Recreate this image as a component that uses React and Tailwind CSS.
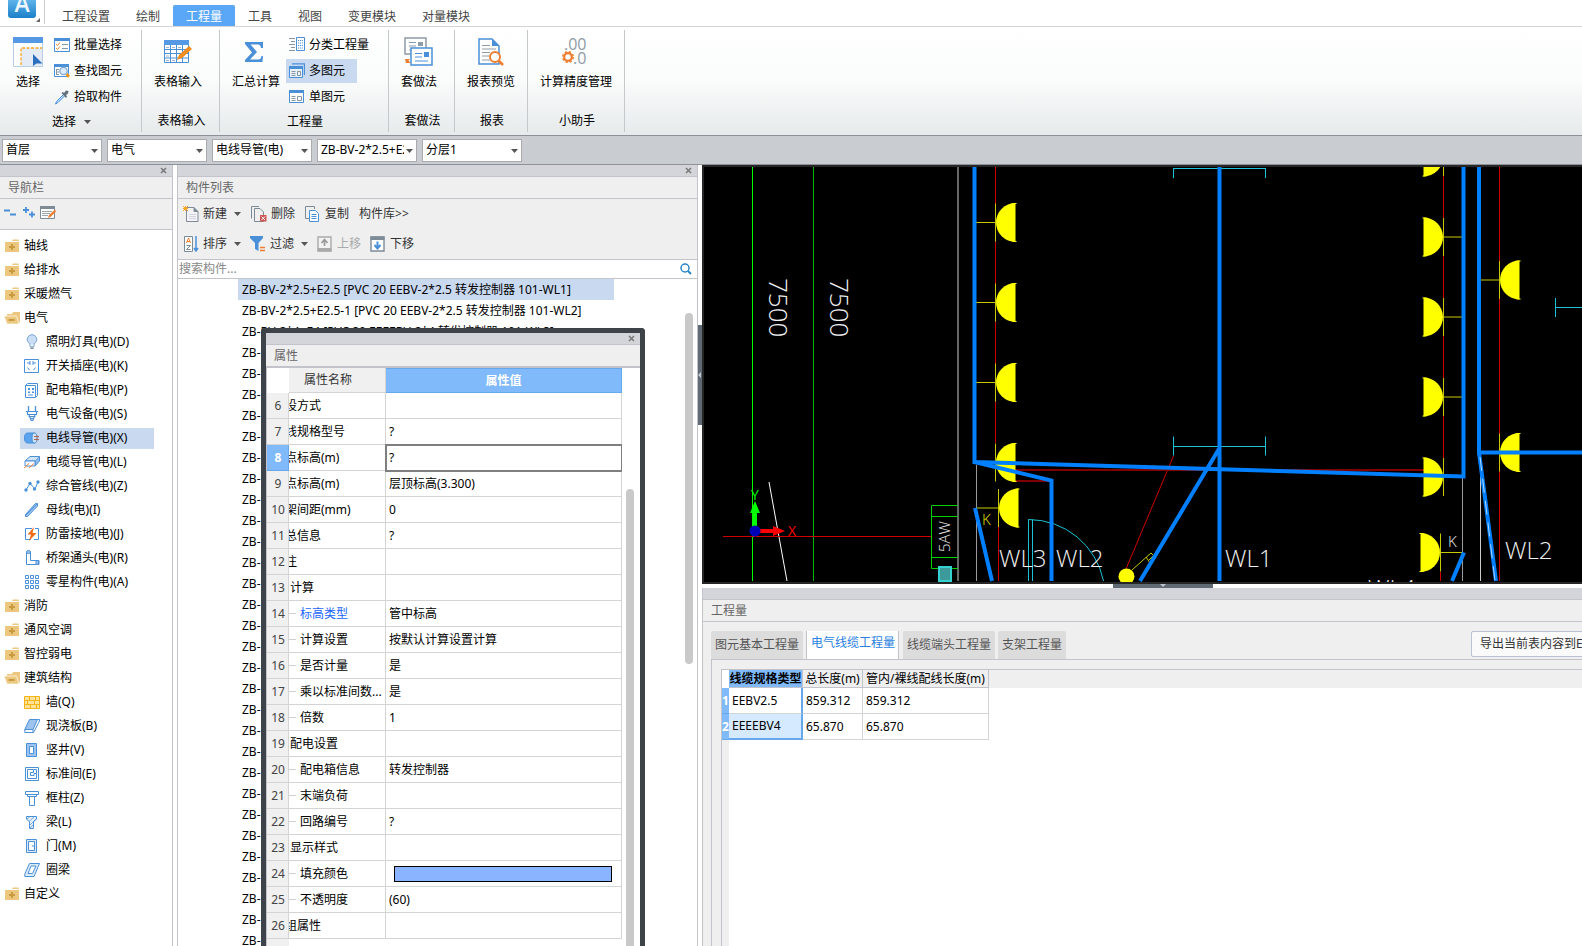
import React, {useState} from 'react';

const BLUE = '#4a90d9';
const TABS = ['工程设置', '绘制', '工程量', '工具', '视图', '变更模块', '对量模块'];
const FILTERS = ['首层', '电气', '电线导管(电)', 'ZB-BV-2*2.5+E2.5', '分层1'];

/* ---------- icons ---------- */

function Svg({size = 16, children, className = ''}) {
    return (
        <svg width={size} height={size} viewBox={`0 0 ${size} ${size}`} fill="none"
             className={`shrink-0 ${className}`} aria-hidden="true">
            {children}
        </svg>
    );
}

function Caret({className = ''}) {
    return (
        <svg width="7" height="4" viewBox="0 0 7 4" className={`shrink-0 ${className}`} aria-hidden="true">
            <path d="M0 0H7L3.5 4Z" fill="#555"/>
        </svg>
    );
}

function CloseIcon() {
    return (
        <svg width="7" height="7" viewBox="0 0 7 7" aria-hidden="true">
            <path d="M1 1L6 6M6 1L1 6" stroke="#777" strokeWidth="1.5"/>
        </svg>
    );
}

function FolderClosed() {
    return (
        <Svg>
            <path d="M1 4H15V14H1Z" fill="#ecc77f"/>
            <path d="M8 2.5L9 1.5H14L15 3H8Z" fill="#ecc77f"/>
            <path d="M5 9H11M8 6V12" stroke="#c99b41" strokeWidth="2"/>
        </Svg>
    );
}

function FolderOpen() {
    return (
        <Svg>
            <path d="M3 6V4H8L9 2H16V12L14 14L12 6Z" fill="#ecc77f"/>
            <path d="M0 6H12.5L15 14H3Z" fill="#ecc77f" stroke="#fff" strokeWidth=".7"/>
            <path d="M4.500 10H10.500" stroke="#c99b41" strokeWidth="2"/>
        </Svg>
    );
}

const NAV_ICONS = {
    bulb: <>
        <circle cx="8" cy="5.500" r="4.800" fill="#c9def5" stroke="#7aa5d6"/>
        <path d="M5.500 9.500L6.500 13H9.500L10.500 9.500" fill="#e3effb" stroke="#7aa5d6"/>
        <path d="M6.500 13.500H9.500V15H6.500Z" fill="#7c8790"/>
    </>,
    socket: <>
        <path d="M.5 1.500H14.500V14.500H.5Z" stroke={BLUE}/>
        <path d="M3 5H6M9 5H12M6 3V7M9 3V7M3.500 9.500L5.500 12M11.500 9.500L9.500 12" stroke={BLUE}/>
    </>,
    cabinet: <>
        <path d="M1.500 3.500L3.500 1.500H13.500V13.500L11.500 15.500H1.500Z" stroke={BLUE}/>
        <path d="M1.500 3.500H11.500V15" stroke={BLUE}/>
        <path d="M4 6H6V8H4ZM8 6H10V8H8ZM4 9.500H6V11H4ZM8 9.500H10V11H8Z" fill={BLUE}/>
        <path d="M4 13H9" stroke={BLUE}/>
    </>,
    plug: <>
        <path d="M4.500 0V5M11.500 0V5" stroke={BLUE} strokeWidth="1.300"/>
        <path d="M2 5.500H14M3.500 6V8.500H12.500V6M4.500 10.500H11.500M6 12.500H10M7 14.500H9M5 9L7.500 15M11 9L8.500 15"
              stroke={BLUE} strokeWidth="1.200"/>
    </>,
    conduit: <>
        <path d="M3.500 3H11V13H3.500C1.500 13 .5 11 .5 8S1.500 3 3.500 3Z" fill="#5aa3ee" stroke={BLUE}/>
        <ellipse cx="10.500" cy="8" rx="2.500" ry="5" fill="#cfe4fa" stroke={BLUE}/>
        <path d="M10 6.500H15M10 9.500H15" stroke="#b06a55"/>
        <path d="M13 5V11" stroke="#b06a55" strokeWidth=".6"/>
    </>,
    cable: <>
        <path d="M1 7L6 2.500H15.500L11 7Z" fill="#cfe4fa" stroke={BLUE}/>
        <path d="M11 7V12L15.500 7V2.500" fill="#90bdec" stroke={BLUE}/>
        <path d="M1 7H11V12H1Z" fill="#fff" stroke={BLUE}/>
        <path d="M0 14L5 9.500M5 14L10 9.500" stroke="#ef7d2f"/>
    </>,
    polyline: <>
        <path d="M2 12L6 5.500L11 11L14 4" stroke={BLUE}/>
        <circle cx="2" cy="12" r="1.700" fill={BLUE}/>
        <circle cx="6" cy="5.500" r="1.700" fill={BLUE}/>
        <circle cx="10.500" cy="11" r="1.700" fill={BLUE}/>
        <circle cx="14" cy="4" r="1.700" fill={BLUE}/>
    </>,
    busbar: <path d="M1.500 12.500L11.500 1.500H13.500V4L3.500 14.500H1.500Z M2 13L13 2" fill="#9cc4ee" stroke={BLUE}/>,
    lightning: <>
        <path d="M8 2.500H1.500V13.500H7M10 13.500H14.500V2.500H11" stroke={BLUE}/>
        <path d="M10 1L3.500 8.500H7L5 15L12.500 7H8.500Z" fill="#ef6c1a"/>
    </>,
    elbow: <>
        <path d="M2.500 2V14.500H15V10.500H6.500V2" stroke={BLUE}/>
        <ellipse cx="4.500" cy="2" rx="2" ry="1.500" fill="#9cc4ee" stroke={BLUE}/>
        <path d="M12 10.500H14.500V14.500H12Z" fill="#9cc4ee" stroke={BLUE}/>
    </>,
    grid: <path d="M1.500 1.500H4.500V4.500H1.500ZM6.500 1.500H9.500V4.500H6.500ZM11.500 1.500H14.500V4.500H11.500ZM1.500 6.500H4.500V9.500H1.500ZM6.500 6.500H9.500V9.500H6.500ZM11.500 6.500H14.500V9.500H11.500ZM1.500 11.500H4.500V14.500H1.500ZM6.500 11.500H9.500V14.500H6.500ZM11.500 11.500H14.500V14.500H11.500Z"
                stroke={BLUE}/>,
    wall: <>
        <path d="M.5 2.500H15.500V14.500H.5Z" fill="#ffe39a" stroke="#f5b316"/>
        <path d="M0 6.500H16M0 10.500H16M5.500 2V6M10.500 6V10M3.500 6V10M6.500 10V14M11.500 2V6M12.500 10V14"
              stroke="#f5b316"/>
    </>,
    slab: <>
        <path d="M5.500 1.500H13.500L9 11.500H.8Z" fill="#9cc4ee" stroke={BLUE}/>
        <path d="M.8 11.500V14.500H9.500L15.500 3V1.500H13.500M9 11.500V14" stroke={BLUE}/>
    </>,
    shaft: <>
        <path d="M2.500 1.500H12.500V14.500H2.500Z" fill="#9cc4ee" stroke={BLUE}/>
        <path d="M5.500 4.500H9.500V11.500H5.500Z" fill="#fff" stroke={BLUE}/>
    </>,
    room: <>
        <path d="M1.500 1.500H14.500V14.500H1.500Z" stroke={BLUE}/>
        <path d="M9.500 3.500H3.500V12.500H12.500V7.500M9.500 3.500V6.500H6.500V9.500H10V7.500H12.500V3.500H10" stroke={BLUE}/>
    </>,
    column: <path d="M1.500 1.500H14.500V4.500H1.500ZM5.500 6.500H10.500V15.500H5.500ZM3.500 4.500V6.500H12.500V4.500" stroke={BLUE}/>,
    beam: <>
        <path d="M2.500 2.500H12.500V5L9.500 8V14.500H5.500V8L2.500 5Z" fill="#e3effb" stroke={BLUE}/>
        <path d="M3 5L6 2.500M5 7.500L10 3M6 11L12 5M6 14L9 11" stroke={BLUE} strokeWidth=".7"/>
    </>,
    door: <>
        <path d="M2.500 1.500H12.500V14.500H2.500Z" fill="#dcebfb" stroke={BLUE}/>
        <path d="M4.500 3.500H10.500V12.500H4.500Z" fill="#fff" stroke={BLUE}/>
        <path d="M9 7V9" stroke={BLUE}/>
    </>,
    ring: <>
        <path d="M5.500 1.500H15.500L10 14.500H.8V12Z" fill="#dcebfb" stroke={BLUE}/>
        <path d="M7 4H12L8.500 11.500H4Z" fill="#fff" stroke={BLUE}/>
    </>,
};

const TREE = [
    {name: '轴线'}, {name: '给排水'}, {name: '采暖燃气'},
    {
        name: '电气', children: [
            ['bulb', '照明灯具(电)(D)'], ['socket', '开关插座(电)(K)'], ['cabinet', '配电箱柜(电)(P)'],
            ['plug', '电气设备(电)(S)'], ['conduit', '电线导管(电)(X)'], ['cable', '电缆导管(电)(L)'],
            ['polyline', '综合管线(电)(Z)'], ['busbar', '母线(电)(I)'], ['lightning', '防雷接地(电)(J)'],
            ['elbow', '桥架通头(电)(R)'], ['grid', '零星构件(电)(A)'],
        ]
    },
    {name: '消防'}, {name: '通风空调'}, {name: '智控弱电'},
    {
        name: '建筑结构', children: [
            ['wall', '墙(Q)'], ['slab', '现浇板(B)'], ['shaft', '竖井(V)'], ['room', '标准间(E)'],
            ['column', '框柱(Z)'], ['beam', '梁(L)'], ['door', '门(M)'], ['ring', '圈梁'],
        ]
    },
    {name: '自定义'},
];

/* ---------- ribbon ---------- */

const SelectIcon = (
    <Svg size={30}>
        <path d="M.5 .5H29.500V29.500H.5Z" fill="#fff" stroke="#b9cfe8"/>
        <path d="M0 0H30V6H0Z" fill="#5598e4"/>
        <path d="M8 11H29V29H8Z" fill="#e4ebf5"/>
        <path d="M8 28V11H29" stroke="#f5a623" strokeWidth="1.300" strokeDasharray="3 1.500"/>
        <path d="M20 17V29L23.500 26.500H29.500Z" fill="#2c6fbf"/>
    </Svg>
);

const BatchIcon = (
    <Svg>
        <path d="M.5 1.500H15.500V14.500H.5Z" fill="#fff" stroke={BLUE}/>
        <path d="M0 1H16V4H0Z" fill={BLUE}/>
        <path d="M2 7L3.500 8.500L6 5.500M2 11L3.500 12.500L6 9.500" stroke="#ef8a2f"/>
        <path d="M8 7.500H14M8 11.500H14" stroke="#8796a3"/>
    </Svg>
);

const FindIcon = (
    <Svg>
        <path d="M.5 2.500H14.500V13.500H.5Z" fill="#fff" stroke={BLUE}/>
        <path d="M0 1H15V4H0Z" fill={BLUE}/>
        <path d="M2 6.500H5M2 9H5M2 11.500H5M2.500 6V12" stroke="#8796a3"/>
        <circle cx="9.500" cy="8" r="3.700" fill="#dcebfb" stroke="#7fa9da" strokeWidth="1.300"/>
        <path d="M11.500 12L13.500 10L16 12.500L14 15Z" fill="#f39a1d"/>
    </Svg>
);

const PickIcon = (
    <Svg>
        <path d="M9.500 5.500L2.500 12.500L1.500 15L4 13.500L10.500 7" fill="#bcdcf8" stroke={BLUE}/>
        <path d="M7.500 4L9 3L10 4L12 1.500L14.500 2L14 4.500L12 6L13 7.500L12 9Z" fill="#5f6f7c"/>
    </Svg>
);

const TableIcon = (
    <Svg size={28}>
        <path d="M.5 3.500H24.500V24.500H.5Z" fill="#fff" stroke={BLUE}/>
        <path d="M0 2H25V7H0Z" fill="#5598e4"/>
        <path d="M0 11.500H25M0 15.500H25M0 20H25M6.500 7V25M12.500 7V25M18.500 7V25" stroke={BLUE}/>
        <path d="M2 9.500H5M8 9.500H11M14 9.500H17M2 18H5M2 22.500H5M8 22.500H11" stroke="#9db4cc"/>
        <path d="M13 22L15 17L25 8L28 11L18 20Z" fill="#f28c1e"/>
    </Svg>
);

const SigmaIcon = (
    <Svg size={28}>
        <path d="M3 4H21V10H19C18.500 7 17.500 6.500 15 6.500H8.500L15 14L8 21.500H16C18.500 21.500 19 20.500 19.500 18H21L20.500 24H3V22L10 14.500L3 6Z"
              fill={BLUE}/>
    </Svg>
);

const ClassifyIcon = (
    <Svg>
        <path d="M0 1.500H6M2 4.500H6M0 7.500H6M2 10.500H6M0 13.500H6" stroke="#8796a3"/>
        <path d="M7.500 .5H15.500V13.500H7.500Z" fill="#fff" stroke={BLUE}/>
        <path d="M9 3.500H14M9 6H14M9 8.500H14M9 11H14" stroke={BLUE} strokeDasharray="1.200 .8"/>
    </Svg>
);

const MultiIcon = (
    <Svg>
        <path d="M.5 4.500H13.500V14.500H.5Z" fill="#e8f0fa" stroke={BLUE}/>
        <path d="M0 3H14V6H0Z" fill={BLUE}/>
        <path d="M2.500 8.500H6.500M2.500 10.500H6.500M2.500 12.500H6.500M8.500 8.500H11.500V12.500H8.500Z" stroke="#8796a3"/>
        <path d="M3 .8H15.500V12" stroke={BLUE} strokeWidth="1.300"/>
    </Svg>
);

const SingleIcon = (
    <Svg>
        <path d="M.5 2.500H14.500V13.500H.5Z" fill="#fff" stroke={BLUE}/>
        <path d="M0 1H15V4H0Z" fill={BLUE}/>
        <path d="M2.500 7.500H6.500M2.500 9.500H6.500M2.500 11.500H6.500M8.500 7.500H12.500V11.500H8.500Z" stroke="#8796a3"/>
    </Svg>
);

const MethodIcon = (
    <Svg size={30}>
        <path d="M1 1H22V17H1Z" fill="#fff" stroke="#8f9ba5" strokeWidth="1.500"/>
        <path d="M5 5.500H12M5 9H12M5 13H9" stroke="#8f9ba5"/>
        <path d="M14 5H19V9H14Z" fill="#8f9ba5"/>
        <path d="M7 11H28V28H7Z" fill="#fff" stroke={BLUE} strokeWidth="1.500"/>
        <path d="M11 16.500H18M11 20H18M11 24H24" stroke={BLUE}/>
        <path d="M20 15H25V20H20Z" fill={BLUE}/>
        <path d="M1 22H6L4.500 23.500L6.500 26H2Z" fill="#ef7d2f"/>
    </Svg>
);

const PreviewIcon = (
    <Svg size={28}>
        <path d="M2 1H15L22 8V26H2Z" fill="#fff" stroke={BLUE} strokeWidth="1.500"/>
        <path d="M15 1L22 8H15Z" fill={BLUE}/>
        <path d="M5 7.500H13M5 11H19M5 14.500H13M5 18H12M5 22H13" stroke="#8f9ba5"/>
        <circle cx="18" cy="19" r="5" fill="#fff" stroke="#ef7d2f" strokeWidth="2"/>
        <path d="M21.500 22.500L26 27" stroke="#ef7d2f" strokeWidth="2.500"/>
    </Svg>
);

const PrecisionIcon = (
    <svg width="28" height="30" viewBox="0 0 28 30" aria-hidden="true">
        <text x="2" y="13" fontSize="16" fontFamily="Open Sans" fill="#8f9ba5">.00</text>
        <text x="11" y="27" fontSize="16" fontFamily="Open Sans" fill="#8f9ba5">.0</text>
        <circle cx="6" cy="20" r="3.800" fill="none" stroke="#ef7d2f" strokeWidth="2.200"/>
        <circle cx="6" cy="20" r="5.300" fill="none" stroke="#ef7d2f" strokeWidth="1.500" strokeDasharray="2.200 2"/>
    </svg>
);

function BigButton({icon, label}) {
    return (
        <button className="flex flex-col items-center gap-1 pt-[2px]">
            <span className="flex h-8 items-center">{icon}</span>
            <span className="leading-5">{label}</span>
        </button>
    );
}

function SmallButton({icon, label, active}) {
    return (
        <button className={`flex h-6 items-center gap-1 pr-3 pl-[3px] ${active ? 'bg-[#c9d9f0]' : ''}`}>
            {icon}<span>{label}</span>
        </button>
    );
}

function Group({title, caret, className, bodyClass, children}) {
    return (
        <div className={`my-[3px] flex flex-col border-r border-[#c6c9cc] ${className}`}>
            <div className={`flex flex-1 pt-1 ${bodyClass}`}>{children}</div>
            <div className="flex h-6 items-center justify-center gap-2 pt-[2px] pl-[2px]">
                {title}{caret && <Caret/>}
            </div>
        </div>
    );
}

function Ribbon() {
    return (
        <div className="flex h-[108px] shrink-0 bg-linear-to-b from-white via-[#fafbfb] to-[#e6eaeb]">
            <Group title="选择" caret className="w-[142px]" bodyClass="gap-2 pl-[13px]">
                <BigButton icon={SelectIcon} label="选择"/>
                <div className="-mt-px flex flex-col items-start gap-[2px]">
                    <SmallButton icon={BatchIcon} label="批量选择"/>
                    <SmallButton icon={FindIcon} label="查找图元"/>
                    <SmallButton icon={PickIcon} label="拾取构件"/>
                </div>
            </Group>
            <Group title="表格输入" className="w-[78px]" bodyClass="pl-3">
                <BigButton icon={TableIcon} label="表格输入"/>
            </Group>
            <Group title="工程量" className="w-[169px]" bodyClass="gap-[6px] pl-3">
                <BigButton icon={SigmaIcon} label="汇总计算"/>
                <div className="-mt-px flex flex-col items-start gap-[2px]">
                    <SmallButton icon={ClassifyIcon} label="分类工程量"/>
                    <SmallButton icon={MultiIcon} label="多图元" active/>
                    <SmallButton icon={SingleIcon} label="单图元"/>
                </div>
            </Group>
            <Group title="套做法" className="w-[66px]" bodyClass="pl-3">
                <BigButton icon={MethodIcon} label="套做法"/>
            </Group>
            <Group title="报表" className="w-[73px]" bodyClass="pl-3">
                <BigButton icon={PreviewIcon} label="报表预览"/>
            </Group>
            <Group title="小助手" className="w-[97px]" bodyClass="pl-3">
                <BigButton icon={PrecisionIcon} label="计算精度管理"/>
            </Group>
        </div>
    );
}

function Header() {
    const [tab, setTab] = useState('工程量');
    return (
        <header className="flex h-[27px] shrink-0 border-b border-[#d5d5d5] bg-white">
            <div className="mr-1 flex h-6 w-[45px] items-start border-r border-[#cccccc] pl-2">
                <svg width="34" height="24" viewBox="0 0 34 24" aria-label="logo">
                    <defs>
                        <linearGradient id="logo" x1="0" y1="0" x2="0" y2="1">
                            <stop offset="0" stopColor="#5fb4ea"/>
                            <stop offset="1" stopColor="#1b7fc9"/>
                        </linearGradient>
                    </defs>
                    <path d="M0 0H28V15Q28 18 25 18H3Q0 18 0 15Z" fill="url(#logo)"/>
                    <text x="14" y="12" textAnchor="middle" fontSize="23" fontWeight="600" fontFamily="Open Sans"
                          fill="#eef7fd">A</text>
                    <path d="M32 18V22H28Z" fill="#666"/>
                </svg>
            </div>
            <nav className="flex items-end">
                {TABS.map((t) => (
                    <button key={t} onClick={() => setTab(t)}
                            className={`h-[21px] px-[13px] pt-[2px] ${t === tab ? 'rounded-t-xs bg-[#5aa7f8] text-white' : 'text-[#444]'}`}>
                        {t}
                    </button>
                ))}
            </nav>
        </header>
    );
}

function FilterBar() {
    return (
        <div className="flex h-[30px] shrink-0 items-center gap-[5px] border-y border-[#8d9298] bg-[#c9ccd1] px-[2px]">
            {FILTERS.map((f) => (
                <label key={f} className="relative block h-[23px] w-[100px]">
                    <select aria-label={f}
                            className="h-full w-full appearance-none overflow-hidden border border-[#a9abae] bg-white pr-3 pl-[3px] text-black">
                        <option>{f}</option>
                    </select>
                    <Caret className="pointer-events-none absolute top-[10px] right-1"/>
                </label>
            ))}
        </div>
    );
}

/* ---------- docked panels ---------- */

function PanelTitle({title, closable = true}) {
    return (
        <>
            <div className="flex h-3 shrink-0 items-center justify-end border-b border-[#c3c4cb] bg-[#d4d5da] pr-[5px]">
                {closable && <button aria-label="关闭"><CloseIcon/></button>}
            </div>
            <h2 className="h-[22px] shrink-0 border-b border-[#c3c4cb] bg-[#efeff0] pl-2 leading-[22px] text-[#666]">{title}</h2>
        </>
    );
}

function NavPanel() {
    const [current, setCurrent] = useState('电线导管(电)(X)');
    return (
        <aside className="flex w-[173px] shrink-0 flex-col border-r border-[#c3c4cb] bg-white">
            <PanelTitle title="导航栏"/>
            <div className="flex h-[31px] shrink-0 items-center gap-[2px] border-b border-[#c3c4cb] bg-[#efeff0] pb-[2px] pl-1">
                <button aria-label="全部折叠">
                    <Svg className="block"><path d="M0 5.500H6M6 9.500H12" stroke={BLUE} strokeWidth="2"/></Svg>
                </button>
                <button aria-label="全部展开">
                    <Svg className="block">
                        <path d="M1 5H7M4 2V8M7 9.500H13M10 6.500V12.500" stroke={BLUE} strokeWidth="1.800"/>
                    </Svg>
                </button>
                <button aria-label="编辑">
                    <Svg className="block">
                        <path d="M.5 1.500H14.500V13.500H.5Z" fill="#fff" stroke="#7d8b96"/>
                        <path d="M0 1H15V4H0Z" fill="#7d8b96"/>
                        <path d="M2 6.500H12M2 8.500H10M2 10.500H8" stroke="#9aa5ae"/>
                        <path d="M8 13L9 10L15 4.500L16 6.500L10.500 12Z" fill="#ef7d2f"/>
                    </Svg>
                </button>
            </div>
            <ul className="overflow-hidden pt-1">
                {TREE.map(({name, children}) => (
                    <li key={name}>
                        <button className="flex h-6 items-center gap-1 pl-1">
                            {children ? <FolderOpen/> : <FolderClosed/>}{name}
                        </button>
                        {children && (
                            <ul className="pr-[18px] pl-5">
                                {children.map(([icon, label]) => (
                                    <li key={label} className="flex h-6 items-center">
                                        <button onClick={() => setCurrent(label)}
                                                className={`flex h-[21px] w-full items-center gap-[6px] pl-1 ${label === current ? 'bg-[#c9d9f0]' : ''}`}>
                                            <Svg>{NAV_ICONS[icon]}</Svg>{label}
                                        </button>
                                    </li>
                                ))}
                            </ul>
                        )}
                    </li>
                ))}
            </ul>
        </aside>
    );
}

const NewIcon = (
    <Svg>
        <path d="M3.500 1.500H11L15 5.500V15.500H3.500Z" fill="#f4f4f8" stroke="#7d8b96"/>
        <path d="M11 1.500V5.500H15" fill="#7d8b96" stroke="#7d8b96"/>
        <path d="M6 8.500H13M6 10.500H13M6 12.500H13" stroke="#d3d3dd"/>
        <path d="M0 0L5 5M5 0L0 5M2.500 0V5M0 2.500H5" stroke="#f5a623"/>
    </Svg>
);
const DeleteIcon = (
    <Svg>
        <path d="M.5 12.500V.5H8M3.500 2.500H9L12.500 6V15.500H3.500Z" stroke="#7d8b96"/>
        <path d="M9 9H15.500V15.500H9Z" fill="#d25555"/>
        <path d="M10.500 10.500L14 14M14 10.500L10.500 14" stroke="#fff"/>
    </Svg>
);
const CopyIcon = (
    <Svg>
        <path d="M4 12.500H.5V.5H9.500V3" stroke="#7d8b96"/>
        <path d="M4.500 4.500H10.500L13.500 7.500V15.500H4.500Z" fill="#fff" stroke={BLUE}/>
        <path d="M6.500 8.500H11.500M6.500 10.500H11.500M6.500 12.500H11.500" stroke={BLUE}/>
    </Svg>
);
const SortIcon = (
    <Svg>
        <path d="M1.500 .5H9.500V15.500H1.500Z" fill="#fff" stroke="#7d8b96"/>
        <path d="M3.500 7L5.500 2L7.500 7M4 5.500H7" stroke="#ef7d2f"/>
        <path d="M3.500 9.500H7.500L3.500 13.500H7.500" stroke="#7d8b96"/>
        <path d="M13 0V14M11 12L13 15L15 12" stroke={BLUE} strokeWidth="1.500"/>
    </Svg>
);
const FilterIcon = (
    <Svg>
        <path d="M0 0H13V2L8.500 7V15L5 13V7L0 2Z" fill={BLUE}/>
        <path d="M10 11.500H15M10 14.500H15" stroke="#ef7d2f" strokeWidth="1.300"/>
    </Svg>
);
const UpIcon = (
    <Svg>
        <path d="M1 1H14V15H1Z" fill="#f2f2f2" stroke="#aaa" strokeWidth="1.400"/>
        <path d="M.5 12H14.500V15.500H.5Z" fill="#aaa"/>
        <path d="M7.500 10V4M4.500 7L7.500 3.500L10.500 7" stroke="#999" strokeWidth="1.700"/>
    </Svg>
);
const DownIcon = (
    <Svg>
        <path d="M1 1H14V15H1Z" fill="#fff" stroke="#7d8b96" strokeWidth="1.400"/>
        <path d="M.5 .5H14.500V4H.5Z" fill="#7d8b96"/>
        <path d="M7.500 5.500V12M4.500 9L7.500 12.500L10.500 9" stroke={BLUE} strokeWidth="2"/>
    </Svg>
);

function Tool({icon, label, caret, disabled}) {
    return (
        <button disabled={disabled} className={`flex h-6 items-center gap-1 ${disabled ? 'text-[#aaa]' : 'text-[#333]'}`}>
            {icon}<span>{label}</span>{caret && <Caret className="ml-[3px]"/>}
        </button>
    );
}

const COMPONENTS = [
    'ZB-BV-2*2.5+E2.5 [PVC 20 EEBV-2*2.5 转发控制器 101-WL1]',
    'ZB-BV-2*2.5+E2.5-1 [PVC 20 EEBV-2*2.5 转发控制器 101-WL2]',
    'ZB-BV-2*4+E4 [PVC 20 EEEEBV-2*4 转发控制器 101-WL3]',
    ...Array(29).fill('ZB-'),
];

const PROPS = [
    {no: 6, name: '敷设方式', value: ''},
    {no: 7, name: '导线规格型号', value: '?'},
    {no: 8, name: '起点标高(m)', value: '?', active: true},
    {no: 9, name: '终点标高(m)', value: '层顶标高(3.300)'},
    {no: 10, name: '支架间距(mm)', value: '0'},
    {no: 11, name: '汇总信息', value: '?'},
    {no: 12, name: '备注', value: ''},
    {no: 13, name: '计算', group: true},
    {no: 14, name: '标高类型', child: true, link: true, value: '管中标高'},
    {no: 15, name: '计算设置', child: true, value: '按默认计算设置计算'},
    {no: 16, name: '是否计量', child: true, value: '是'},
    {no: 17, name: '乘以标准间数...', child: true, value: '是'},
    {no: 18, name: '倍数', child: true, value: '1'},
    {no: 19, name: '配电设置', group: true},
    {no: 20, name: '配电箱信息', child: true, value: '转发控制器'},
    {no: 21, name: '末端负荷', child: true, value: ''},
    {no: 22, name: '回路编号', child: true, value: '?'},
    {no: 23, name: '显示样式', group: true},
    {no: 24, name: '填充颜色', child: true, color: true},
    {no: 25, name: '不透明度', child: true, value: '(60)'},
    {no: 26, name: '分组属性', value: ''},
];

function PropName({row}) {
    if (row.child) {
        return (
            <div className="flex items-center gap-1 overflow-hidden whitespace-nowrap">
                <span className="h-px w-[7px] shrink-0 bg-[#d0d0d0]"/>
                <span className={row.link ? 'text-[#1a66ff]' : ''}>{row.name}</span>
            </div>
        );
    }
    return (
        <div className="overflow-hidden whitespace-nowrap">
            <span className={row.group ? 'ml-px' : '-ml-4'}>{row.name}</span>
        </div>
    );
}

function PropertyWindow() {
    return (
        <section
            className="absolute top-[163px] bottom-0 left-[83px] flex w-[384px] flex-col overflow-hidden rounded-t-sm border-5 border-b-0 border-[#3d4348] bg-white">
            <PanelTitle title="属性"/>
            <div className="flex min-h-0 flex-1 border-t border-l border-[#c3c4cb]">
                <div className="w-[355px] shrink-0 overflow-hidden">
                    <table className="w-full table-fixed border-separate border-spacing-0">
                        <colgroup>
                            <col className="w-[22px]"/>
                            <col className="w-[97px]"/>
                            <col/>
                        </colgroup>
                        <thead>
                        <tr className="h-[25px]">
                            <td/>
                            <th className="border-r border-b border-[#d4d4d4] bg-[#f0f0f0] p-0 pr-[18px] font-normal text-[#333]">属性名称</th>
                            <th className="border border-l-0 border-[#67a8ec] bg-[#80bafa] p-0 font-semibold text-white">属性值</th>
                        </tr>
                        </thead>
                        <tbody>
                        {PROPS.map((row) => (
                            <tr key={row.no} className="h-[26px]">
                                <th className={`border-r border-b p-0 pl-px ${row.active ? 'border-[#67a8ec] bg-[#80bafa] font-bold text-white' : 'border-[#d4d4d4] bg-[#f0f0f0] font-normal text-[#444]'}`}>
                                    {row.no}
                                </th>
                                <td className="border-r border-b border-[#d4d4d4] p-0"><PropName row={row}/></td>
                                <td className={`border-r border-b border-[#d4d4d4] py-0 pr-0 pl-[3px] ${row.active ? 'outline-2 -outline-offset-1 outline-[#7f7f7f]' : ''}`}>
                                    {row.color
                                        ? <div className="mr-[9px] ml-[5px] h-4 border border-black bg-[#8ab4ff]"/>
                                        : row.value}
                                </td>
                            </tr>
                        ))}
                        </tbody>
                    </table>
                    <div className="h-2 w-[22px] bg-[#f0f0f0]"/>
                </div>
                <div className="mt-[121px] ml-1 w-2 rounded-t-full bg-[#c9c9c9]"/>
            </div>
        </section>
    );
}

function ComponentPanel() {
    const [selected, setSelected] = useState(0);
    return (
        <section
            className="relative ml-[4px] flex w-[521px] shrink-0 flex-col border-x border-[#c3c4cb] bg-white">
            <PanelTitle title="构件列表"/>
            <div className="flex h-[61px] shrink-0 flex-col justify-between border-b border-[#c3c4cb] bg-[#efeff0] py-[3px] pl-[5px]">
                <div className="flex gap-[10px]">
                    <Tool icon={NewIcon} label="新建" caret/>
                    <Tool icon={DeleteIcon} label="删除"/>
                    <Tool icon={CopyIcon} label="复制"/>
                    <Tool label="构件库>>"/>
                </div>
                <div className="flex gap-[9px]">
                    <Tool icon={SortIcon} label="排序" caret/>
                    <Tool icon={FilterIcon} label="过滤" caret/>
                    <Tool icon={UpIcon} label="上移" disabled/>
                    <Tool icon={DownIcon} label="下移"/>
                </div>
            </div>
            <div className="flex h-[19px] shrink-0 items-center border-b border-[#c3c4cb] pr-[5px] pl-px">
                <input type="text" placeholder="搜索构件..." aria-label="搜索构件"
                       className="min-w-0 flex-1 outline-none placeholder:text-[#888]"/>
                <Svg size={12}>
                    <circle cx="5" cy="5" r="4" stroke="#2a86c4" strokeWidth="1.500"/>
                    <path d="M8 8L11 11" stroke="#2a86c4" strokeWidth="2"/>
                </Svg>
            </div>
            <div className="flex min-h-0 flex-1">
                <ul className="min-w-0 flex-1 overflow-hidden pl-[60px]">
                    {COMPONENTS.map((name, i) => (
                        <li key={i}>
                            <button onClick={() => setSelected(i)}
                                    className={`block h-[21px] w-[376px] pl-1 text-left whitespace-nowrap ${i === selected ? 'bg-[#c9d9f0]' : ''}`}>
                                {name}
                            </button>
                        </li>
                    ))}
                </ul>
                <div className="mt-[34px] mr-1 mb-[282px] w-2 rounded-full bg-[#c9c9c9]"/>
            </div>
            <PropertyWindow/>
        </section>
    );
}

/* ---------- drawing ---------- */

// half-round wall socket, dir 1 opens to the right, -1 to the left
function Socket({x, y, dir, stub}) {
    const flat = x + dir * 20;
    const sweep = dir === 1 ? 0 : 1;
    return (
        <g stroke="#c8c800">
            {stub && <path d={`M${stub} ${y}H${x}`}/>}
            <path d={`M${x} ${y - 19}V${y + 19}`}/>
            <path d={`M${flat} ${y - 19.5}A19.5 19.5 0 0 ${sweep} ${flat} ${y + 19.5}Z`} fill="#ff0" stroke="none"/>
            <path d={`M${flat - dir * 3} ${y - 19}H${flat + dir}M${flat - dir * 3} ${y + 19}H${flat + dir}`} stroke="#ff0"/>
        </g>
    );
}

function Drawing() {
    return (
        <svg className="block h-full w-full" fill="none" fontFamily="Open Sans, sans-serif">
            <path d="M48.500 0V414" stroke="#0f0"/>
            <path d="M109.500 0V414" stroke="#00b400"/>
            <path d="M254 0V414" stroke="#666" strokeWidth="2"/>
            <path d="M272.500 298V414M758.500 310V414" stroke="#999"/>
            <path d="M776.500 286V414" stroke="#ccc"/>
            <path d="M65 315L83 414" stroke="#fff"/>

            <g stroke="#d00000">
                <path d="M291.500 0V276M294.500 360V414M739.500 0V291M736.500 405V414M795.500 0V414"/>
                <path d="M19 369.500H227M422 402L469.500 289"/>
                <path d="M311 303H720M311 314H347" stroke="#800000" strokeWidth="2"/>
            </g>

            <path d="M254 338.500H227.500V401.500H254M227.500 349.500H254M227.500 390.500H254" stroke="#00d000"/>
            <path d="M235 400H247V414H235Z" fill="#3d9a9a" stroke="#35d0d0" strokeWidth="2"/>

            <g stroke="#1cc3d6">
                <path d="M469.500 1V11M561.500 1V11M469.500 1.500H561.500"/>
                <path d="M469.500 269.500V288.500M561.500 269.500V288.500M469.500 279.500H561.500"/>
                <path d="M851.500 131V150M851.500 140.500H1800"/>
                <path d="M324.500 414V352.500M328.500 414V352.500M324.500 352.500A76.500 76.500 0 0 1 399.500 414"/>
            </g>

            {[55.5, 135.5, 215.5, 295.5].map((y) => <Socket key={y} x={291.5} y={y} dir={1} stub={272}/>)}
            <Socket x={294.5} y={341} dir={1} stub={272}/>
            {[-10, 70, 150, 230, 310].map((y) => <Socket key={y} x={739.5} y={y} dir={-1} stub={758}/>)}
            <Socket x={736.5} y={385.5} dir={-1} stub={758}/>
            <Socket x={795.5} y={113} dir={1} stub={777}/>
            <Socket x={795.5} y={285.5} dir={1}/>

            <circle cx="422.500" cy="409.500" r="8" fill="#ff0"/>
            <path d="M428 403L447 386L450 389M442 390L446 396M445 393L449 389" stroke="#c8c800"/>

            <g fontSize="24" fontWeight="300" fill="#f0f0f0">
                <text x="295" y="400">WL3</text>
                <text x="352" y="400">WL2</text>
                <text x="521" y="400">WL1</text>
                <text x="801" y="392">WL2</text>
                <text x="664" y="430">WL4</text>
                <text transform="translate(65 111) rotate(90)" fontSize="26">7500</text>
                <text transform="translate(126 111) rotate(90)" fontSize="26">7500</text>
                <text transform="translate(246 385) rotate(-90)" fontSize="15">5AW</text>
                <text x="744" y="380" fontSize="15">K</text>
                <text x="278" y="358" fontSize="15" fill="#e0e000">K</text>
            </g>

            <g stroke="#0080ff" strokeWidth="4">
                <path d="M270.500 0V295L759.500 309.500V0"/>
                <path d="M270.500 295L347.500 313.500V414M271 341L288 414"/>
                <path d="M515.500 0V414M515.500 281L436 414"/>
                <path d="M775 0V285.500H1800M775 285.500L792 414M760 385.500L748 414"/>
            </g>
            <path d="M776 290L791 414" stroke="#b5d8ff" strokeDasharray="14 8"/>

            <path d="M51 362V344" stroke="#0f0" strokeWidth="4"/>
            <path d="M46 346L51 334L56 346Z" fill="#0f0"/>
            <path d="M54 364H72" stroke="#f00" strokeWidth="4"/>
            <path d="M69 359L81 364L69 369Z" fill="#f00"/>
            <circle cx="51" cy="364" r="5.500" fill="#0000b8"/>
            <text x="47" y="333" fontSize="14" fill="#0f0">Y</text>
            <text x="84" y="369" fontSize="14" fill="#f00">X</text>
        </svg>
    );
}

/* ---------- quantities ---------- */

const QTY_TABS = ['图元基本工程量', '电气线缆工程量', '线缆端头工程量', '支架工程量'];

function QuantityPanel() {
    const [tab, setTab] = useState('电气线缆工程量');
    return (
        <section className="flex min-h-0 flex-[358] flex-col overflow-hidden border-l border-[#c3c4cb] bg-[#efeff0]">
            <PanelTitle title="工程量" closable={false}/>
            <div className="flex min-h-0 flex-1 flex-col pt-[9px] pl-2">
                <div className="flex h-7 shrink-0">
                    <div className="flex gap-[3px]">
                        {QTY_TABS.map((t) => (
                            <button key={t} onClick={() => setTab(t)}
                                    className={t === tab
                                        ? 'mr-px border-x border-[#c3c4cb] bg-white pr-[3px] pb-1 pl-1 text-[#2a7fe0]'
                                        : 'rounded-t-xs bg-[#dcdcdc] px-1 text-[#555]'}>
                                {t}
                            </button>
                        ))}
                    </div>
                    <div className="ml-auto w-[111px] overflow-hidden">
                        <button className="h-[26px] rounded-xs border border-[#b9c3d3] bg-[#fafafa] px-2 whitespace-nowrap text-[#333]">
                            导出当前表内容到Excel
                        </button>
                    </div>
                </div>
                <div className="min-h-0 flex-1 border-t border-l border-[#c3c4cb] pt-[9px] pl-[9px]">
                    <div className="h-full border-t border-l border-[#c3c4cb] bg-linear-to-r from-[#efeff0] from-[7px] to-white to-[7px]">
                        <div className="bg-linear-to-b from-[#efeff0] from-[18px] to-transparent to-[18px]">
                            <table className="table-fixed border-separate border-spacing-0">
                                <colgroup>
                                    <col className="w-[7px]"/>
                                    <col className="w-[74px]"/>
                                    <col className="w-[60px]"/>
                                    <col className="w-[126px]"/>
                                </colgroup>
                                <thead>
                                <tr className="h-[18px] leading-4 whitespace-nowrap">
                                    <td className="bg-white p-0"/>
                                    <th className="border-r border-b border-[#c3c4cb] bg-[#80bafa] p-0 font-bold">线缆规格类型</th>
                                    <th className="border-r border-b border-[#c3c4cb] p-0 font-normal">总长度(m)</th>
                                    <th className="border-r border-b border-[#c3c4cb] p-0 font-normal">管内/裸线配线长度(m)</th>
                                </tr>
                                </thead>
                                <tbody>
                                {[['EEBV2.5', '859.312'], ['EEEEBV4', '65.870']].map(([type, len], i) => (
                                    <tr key={type} className="h-[26px]">
                                        <th className="overflow-hidden border-b border-[#67a8ec] bg-[#80bafa] p-0 text-left font-bold text-white">{i + 1}</th>
                                        <td className={`border-r-2 p-0 pl-[3px] ${i === 1 ? 'border-b-2 border-[#67a8ec] bg-[#d5e9ff]' : 'border-b border-r-[#67a8ec] border-b-[#d4d4d4] bg-white'}`}>{type}</td>
                                        <td className="border-r border-b border-[#d4d4d4] bg-white p-0 pl-[3px]">{len}</td>
                                        <td className="border-r border-b border-[#d4d4d4] bg-white p-0 pl-[3px]">{len}</td>
                                    </tr>
                                ))}
                                </tbody>
                            </table>
                        </div>
                    </div>
                </div>
            </div>
        </section>
    );
}

function Workspace() {
    return (
        <div className="flex min-w-0 flex-1">
            <div className="flex w-1 shrink-0 flex-col pt-[160px]">
                <button aria-label="收起左侧" className="flex h-[100px] w-full items-center bg-[#5f6a75]">
                    <svg width="3" height="6" viewBox="0 0 3 6"><path d="M3 0V6L0 3Z" fill="#bfc5ca"/></svg>
                </button>
            </div>
            <div className="flex min-w-0 flex-1 flex-col">
                <div className="min-h-0 flex-[415] overflow-hidden border-2 border-r-0 border-[#262626] bg-black">
                    <Drawing/>
                </div>
                <div className="flex h-1 shrink-0 justify-center">
                    <button aria-label="收起下方" className="mr-[-42px] flex h-full w-[100px] justify-center bg-[#5f6a75]">
                        <svg width="6" height="3" viewBox="0 0 6 3"><path d="M0 0H6L3 3Z" fill="#bfc5ca"/></svg>
                    </button>
                </div>
                <QuantityPanel/>
            </div>
        </div>
    );
}

export default function App() {
    return (
        <div className="flex h-screen flex-col overflow-hidden bg-white font-['Noto_Sans','Noto_Sans_CJK_SC',sans-serif] text-[12px] leading-[18px] text-black">
            <Header/>
            <Ribbon/>
            <FilterBar/>
            <main className="flex min-h-0 flex-1">
                <NavPanel/>
                <ComponentPanel/>
                <Workspace/>
            </main>
        </div>
    );
}
